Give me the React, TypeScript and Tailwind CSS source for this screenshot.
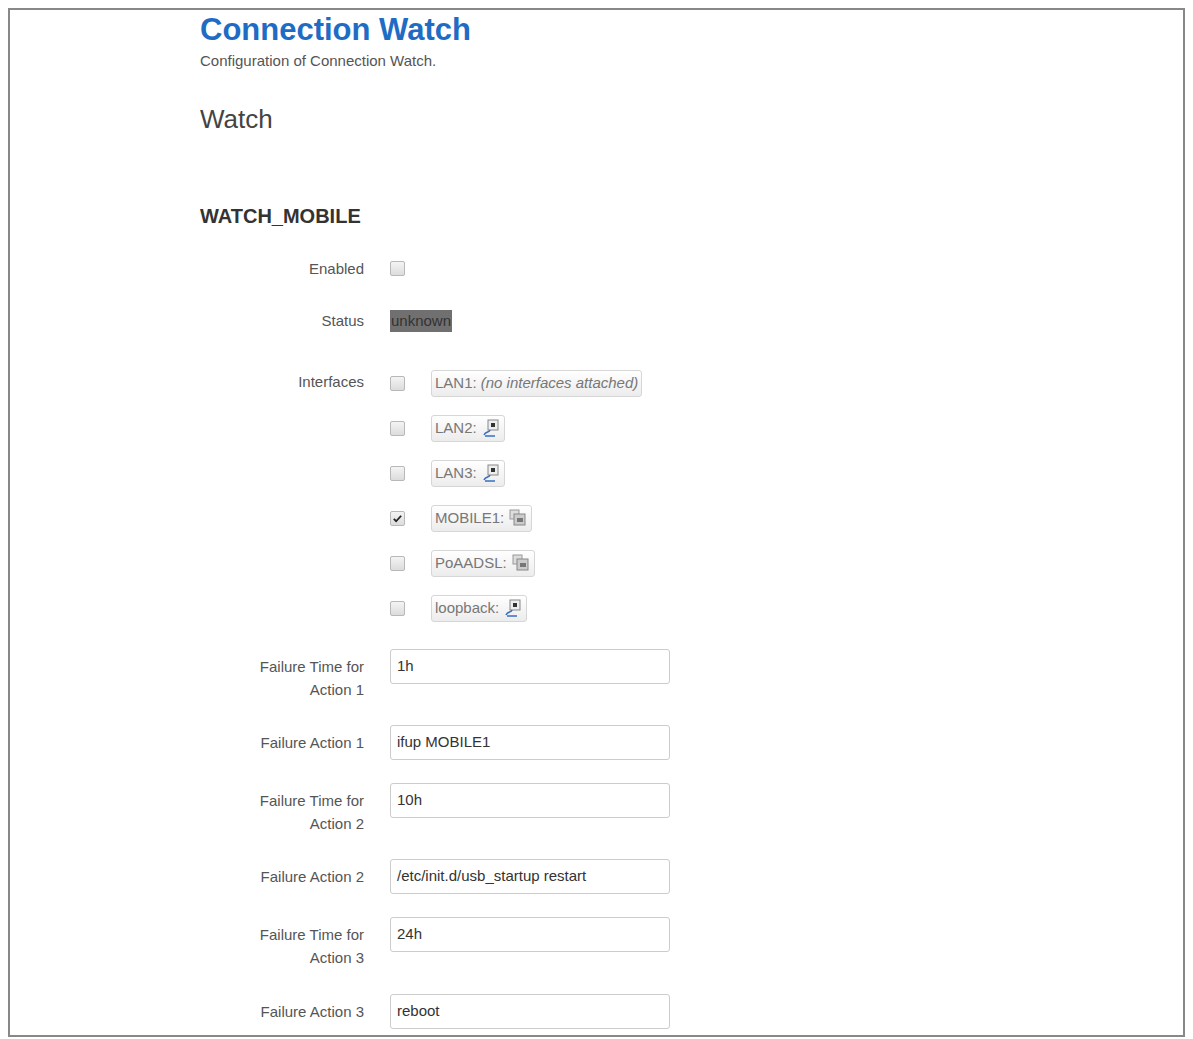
import React from "react";

const Cb = ({ checked = false }: { checked?: boolean }) => (
  <span className="w-[15px] h-[15px] border border-[#b8b8b8] rounded-[2px] bg-gradient-to-b from-[#f4f4f4] to-[#dcdcdc] flex items-center justify-center shrink-0">
    {checked && (
      <svg width="11" height="11" viewBox="0 0 12 12"><path d="M2 6.5l2.5 2.5L10 3" stroke="#222" strokeWidth="2" fill="none" /></svg>
    )}
  </span>
);

const EthIcon = () => (
  <svg width="20" height="20" viewBox="0 0 20 20" className="ml-1">
    <rect x="7" y="2" width="10" height="10" fill="#eee" stroke="#888" />
    <rect x="10" y="5" width="4" height="4" fill="#333" />
    <path d="M3 17c2-4 5-2 6-5M4 18h10" stroke="#3a6fc0" strokeWidth="1.6" fill="none" />
  </svg>
);
const MobIcon = () => (
  <svg width="20" height="20" viewBox="0 0 20 20" className="ml-1">
    <rect x="2" y="2" width="9" height="9" fill="#ddd" stroke="#999" />
    <rect x="6" y="6" width="11" height="11" fill="#ccc" stroke="#888" />
    <rect x="9" y="10" width="6" height="4" fill="#777" />
  </svg>
);

const Iface = ({ label, icon, checked }: { label: React.ReactNode; icon?: React.ReactNode; checked?: boolean }) => (
  <div className="flex items-center h-[28px]">
    <Cb checked={checked} />
    <span className="ml-[26px] h-[27px] flex items-center px-[3px] border border-[#d6d6d6] rounded-[3px] bg-gradient-to-b from-white to-[#ececec] text-[#777] text-[15px]">
      {label}
      {icon}
    </span>
  </div>
);

const Label = ({ children }: { children: React.ReactNode }) => (
  <div className="w-[164px] text-right text-[#555] text-[15px] leading-[23px] shrink-0">{children}</div>
);

const Input = ({ value }: { value: string }) => (
  <div className="ml-[26px] w-[280px] h-[35px] border border-[#ccc] rounded-[3px] px-[6px] pt-[6px] text-[15px] text-[#333] leading-[20px] shrink-0">
    {value}
  </div>
);

export default function App() {
  return (
    <div className="w-[1193px] h-[1039px] bg-white p-[8px] pb-[2px] overflow-hidden" style={{ fontFamily: "Arial, 'Liberation Sans', sans-serif" }}>
      <div className="h-full border-2 border-[#888] pl-[190px] pt-[2px]">
        <h1 className="text-[31px] font-bold text-[#1f6cc4] leading-[36px]">Connection Watch</h1>
        <p className="text-[15px] text-[#555] mt-[3px] leading-[20px]">Configuration of Connection Watch.</p>
        <h2 className="text-[26px] text-[#444] mt-[33px] leading-[30px]">Watch</h2>
        <h3 className="text-[20px] font-bold text-[#333] mt-[70px] leading-[24px]">WATCH_MOBILE</h3>

        <div className="flex items-center mt-[29px]">
          <Label>Enabled</Label>
          <span className="ml-[26px]"><Cb /></span>
        </div>
        <div className="flex items-center mt-[29px]">
          <Label>Status</Label>
          <span className="ml-[26px] bg-[#707070] text-[#333] text-[15px] leading-[22px] px-[1px]">unknown</span>
        </div>
        <div className="flex mt-[38px]">
          <Label>Interfaces</Label>
          <div className="ml-[26px] flex flex-col gap-[17px] -mt-[1px]">
            <Iface label={<>LAN1: <i className="ml-1">(no interfaces attached)</i></>} />
            <Iface label="LAN2:" icon={<EthIcon />} />
            <Iface label="LAN3:" icon={<EthIcon />} />
            <Iface label="MOBILE1:" icon={<MobIcon />} checked />
            <Iface label="PoAADSL:" icon={<MobIcon />} />
            <Iface label="loopback:" icon={<EthIcon />} />
          </div>
        </div>

        <div className="flex flex-col mt-[27px]">
          {[
            [<>Failure Time for<br />Action 1</>, "1h", "h-[76px]"],
            [<>Failure Action 1</>, "ifup MOBILE1", "h-[58px]"],
            [<>Failure Time for<br />Action 2</>, "10h", "h-[76px]"],
            [<>Failure Action 2</>, "/etc/init.d/usb_startup restart", "h-[58px]"],
            [<>Failure Time for<br />Action 3</>, "24h", "h-[77px]"],
            [<>Failure Action 3</>, "reboot", "h-[40px]"],
          ].map(([l, v, h], i) => (
            <div key={i} className={"flex items-start shrink-0 " + (h as string)}>
              <div className="pt-[6px]"><Label>{l}</Label></div>
              <Input value={v as string} />
            </div>
          ))}
        </div>
      </div>
    </div>
  );
}
